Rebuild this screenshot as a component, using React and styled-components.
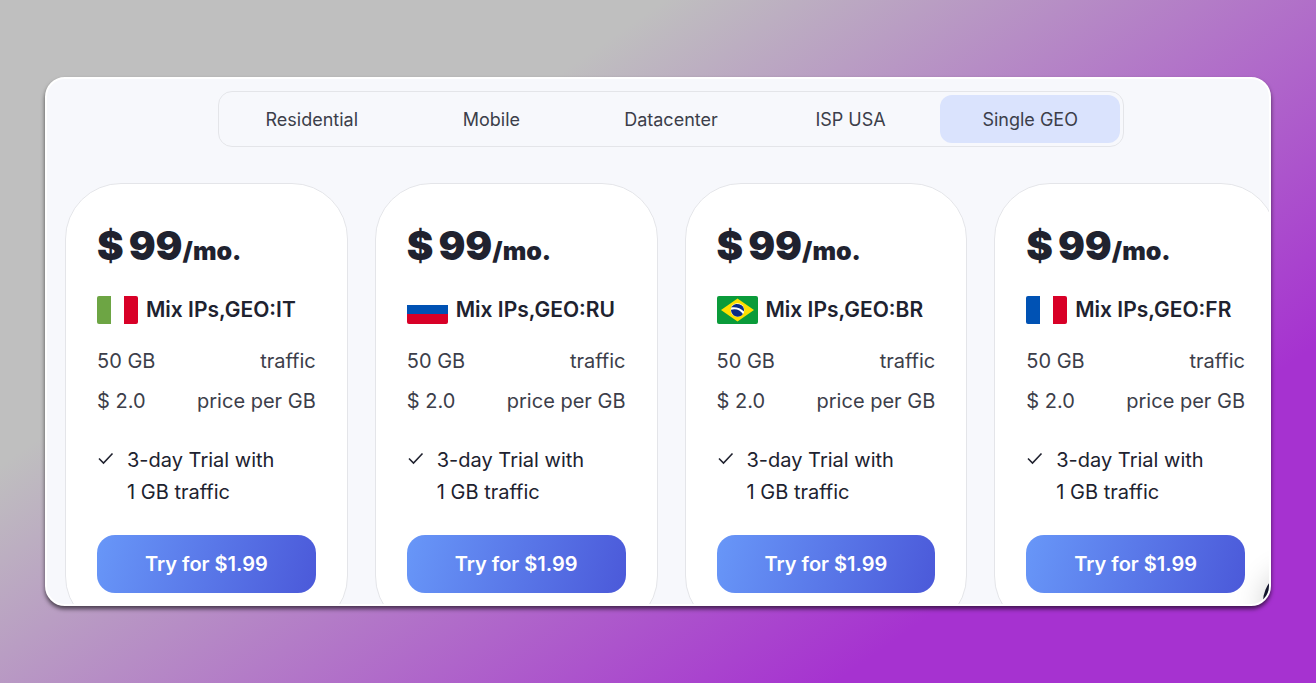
import React, { useState } from 'react';
import styled, { createGlobalStyle } from 'styled-components';

// Define colors used throughout the app
const colors = {
  ink: '#20222f',
  text: '#3c3e4a',
  panel: '#f7f8fc',
  line: '#e4e5e9',
  active: '#dae3fd',
};

const GlobalStyle = createGlobalStyle`
  * {
    box-sizing: border-box;
  }

  body {
    margin: 0;
    font-family: Inter, sans-serif;
    color: ${colors.ink};
  }
`;

const Page = styled.main`
  min-height: 100vh;
  padding: 77px 45px;
  background: linear-gradient(145deg, #bfbfbf 29%, #a632d0 79%);
`;

// The panel cuts the cards off at its right and bottom edges
const Panel = styled.section`
  position: relative;
  overflow: hidden;
  padding: 12px 0 0 18px;
  border: 2px solid #ffffff;
  border-radius: 20px;
  background: ${colors.panel};
  box-shadow: 0 3px 4px rgba(0, 0, 0, 0.6);
`;

const Content = styled.div`
  display: flex;
  flex-direction: column;
  align-items: center;
  gap: 36px;
  margin: 0 -8px -28px 0;
`;

const Tabs = styled.nav`
  display: flex;
  width: 75%;
  max-width: 906px;
  padding: 3px;
  border: 1px solid ${colors.line};
  border-radius: 14px;
`;

const Tab = styled.button`
  flex: 1 1 0;
  height: 48px;
  border: 0;
  border-radius: 12px;
  background: ${(props) => (props.$active ? colors.active : 'transparent')};
  color: ${colors.text};
  font: 400 18px Inter, sans-serif;
  cursor: pointer;
`;

const Cards = styled.div`
  display: grid;
  grid-template-columns: repeat(4, 1fr);
  gap: 27px;
  width: 100%;
`;

const Card = styled.article`
  padding: 39px 31px 38px;
  border: 1px solid ${colors.line};
  border-radius: 56px;
  background: #ffffff;
`;

const Price = styled.div`
  font: 900 25px/46px Inter, sans-serif;
  white-space: nowrap;
`;

const Amount = styled.span`
  font-size: 40px;
`;

const Title = styled.h2`
  display: flex;
  align-items: center;
  gap: 8px;
  margin: 22px 0 21px;
  font-size: 21px;
  font-weight: 600;
  line-height: 28px;
  white-space: nowrap;
`;

const Flag = styled.svg`
  flex: none;
  width: 41px;
  height: 28px;
  border-radius: 2px;
`;

const Specs = styled.dl`
  display: grid;
  gap: 8px;
  margin: 0;
`;

const Spec = styled.div`
  display: flex;
  flex-direction: row-reverse;
  justify-content: space-between;
  color: ${colors.text};
  font-size: 20px;
  line-height: 32px;

  dt,
  dd {
    margin: 0;
  }
`;

const Trial = styled.p`
  display: flex;
  gap: 12px;
  margin: 27px 0;
  font-size: 20px;
  line-height: 32px;

  svg {
    flex: none;
    width: 18px;
    height: 28px;
  }
`;

const BuyButton = styled.button`
  width: 100%;
  height: 58px;
  border: 0;
  border-radius: 18px;
  background: linear-gradient(105deg, #6897f8, #4b59d9);
  color: #ffffff;
  font: 600 20px Inter, sans-serif;
  cursor: pointer;
`;

// Floating chat bubble, mostly outside the panel
const ChatBubble = styled.div`
  position: absolute;
  right: -58px;
  bottom: -30px;
  width: 64px;
  height: 64px;
  border-radius: 50%;
  background: #11132a;
  box-shadow: 0 2px 30px rgba(0, 0, 0, 0.2);
`;

const flags = {
  IT: (
    <>
      <path fill="#6da544" d="M0 0h14v28H0z" />
      <path fill="#fff" d="M14 0h13v28H14z" />
      <path fill="#d80027" d="M27 0h14v28H27z" />
    </>
  ),
  RU: (
    <>
      <path fill="#fff" d="M0 0h41v9H0z" />
      <path fill="#0052b4" d="M0 9h41v10H0z" />
      <path fill="#d80027" d="M0 18h41v10H0z" />
    </>
  ),
  BR: (
    <>
      <path fill="#0a9b3a" d="M0 0h41v28H0z" />
      <path fill="#fedf00" d="M20.5 2.5 37 14 20.5 25.5 4 14z" />
      <circle cx="20.5" cy="14" r="6.8" fill="#fff" />
      <path fill="#0b2c84" d="M17.5 13.3c-1.2 0-2.4.2-3.5.5 0 3.7 2.9 6.9 6.5 6.9 2.3 0 4.2-1.1 5.4-2.8-2-2.8-5-4.6-8.4-4.6z" />
      <path fill="#0b2c84" d="M27 15.5A6.8 6.8 0 0 0 14.3 11.5c4.8-.8 9.4.8 12.7 4z" />
    </>
  ),
  FR: (
    <>
      <path fill="#0052b4" d="M0 0h14v28H0z" />
      <path fill="#fff" d="M14 0h13v28H14z" />
      <path fill="#d80027" d="M27 0h14v28H27z" />
    </>
  ),
};

const categories = ['Residential', 'Mobile', 'Datacenter', 'ISP USA', 'Single GEO'];

function PlanCard({ geo }) {
  return (
    <Card>
      <Price>
        <Amount>$</Amount> <Amount>99</Amount>/mo.
      </Price>
      <Title>
        <Flag viewBox="0 0 41 28" aria-hidden="true">{flags[geo]}</Flag>
        Mix IPs,GEO:{geo}
      </Title>
      <Specs>
        <Spec>
          <dt>traffic</dt>
          <dd>50 GB</dd>
        </Spec>
        <Spec>
          <dt>price per GB</dt>
          <dd>$ 2.0</dd>
        </Spec>
      </Specs>
      <Trial>
        <svg viewBox="0 0 18 28" fill="none" stroke={colors.ink} strokeWidth="1.6" aria-hidden="true">
          <path d="m2 14.500 4.500 4.500 9-9.500" />
        </svg>
        <span>
          3-day Trial with
          <br />
          1 GB traffic
        </span>
      </Trial>
      <BuyButton type="button">Try for $1.99</BuyButton>
    </Card>
  );
}

export default function App() {
  const [active, setActive] = useState('Single GEO');

  return (
    <Page>
      <GlobalStyle />
      <Panel>
        <Content>
          <Tabs>
            {categories.map((name) => (
              <Tab key={name} type="button" $active={name === active} onClick={() => setActive(name)}>
                {name}
              </Tab>
            ))}
          </Tabs>
          <Cards>
            {Object.keys(flags).map((geo) => (
              <PlanCard key={geo} geo={geo} />
            ))}
          </Cards>
        </Content>
        <ChatBubble />
      </Panel>
    </Page>
  );
}
